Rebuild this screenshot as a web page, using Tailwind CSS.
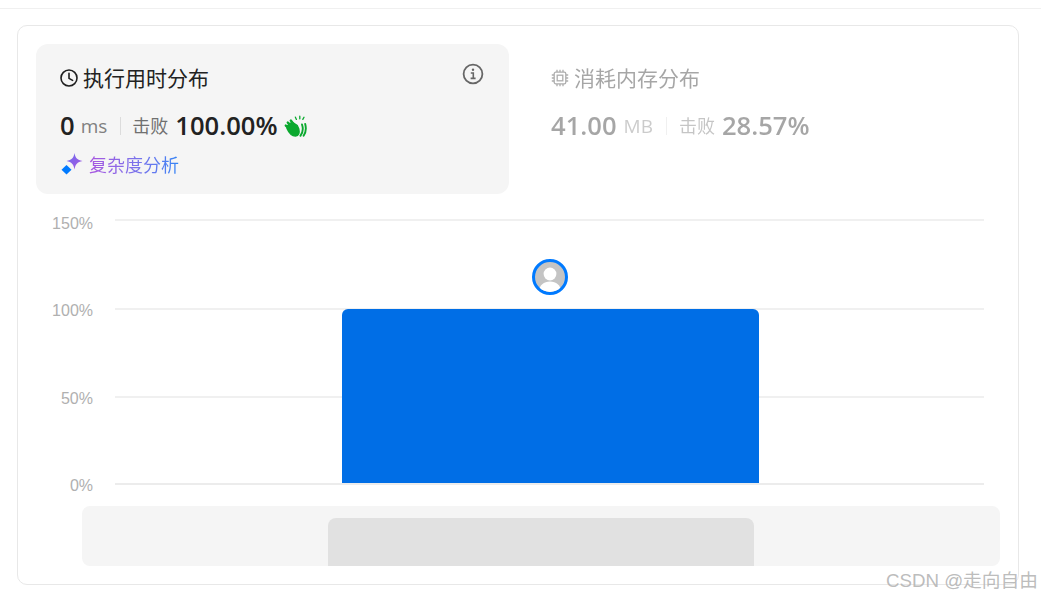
<!DOCTYPE html>
<html lang="zh-CN">
<head>
  <meta charset="UTF-8">
  <title>执行用时分布</title>
  <script src="https://cdn.jsdelivr.net/npm/@tailwindcss/browser@4"></script>
</head>
<body class="relative w-[1041px] h-[599px] overflow-hidden bg-white font-['Open_Sans','Noto_Sans_CJK_SC',sans-serif]">

  <!-- top rule -->
  <div class="h-[9px] border-b border-[#f0f0f0]"></div>

  <div class="mt-4 ml-[17px] w-[1002px] h-[560px] rounded-[10px] border border-[#e8e8e8] pt-[18px] pl-[18px]">

    <!-- tabs -->
    <div class="flex">
      <div class="relative w-[473px] h-[150px] rounded-xl bg-[#f5f5f5] pl-[24px] pt-[21px]">
        <div class="flex items-center h-[26px]">
          <svg class="w-[18px] h-[18px] mr-[5px]" viewBox="0 0 18 18" fill="none" stroke="#1f1f1f" stroke-width="1.6"><circle cx="9" cy="9" r="8"/><path d="M9 4.2V9.4L12.6 11.4" stroke-linecap="round"/></svg>
          <span class="text-[21px] leading-[26px] text-[#222]">执行用时分布</span>
        </div>
        <svg class="absolute left-[426px] top-[19px] w-[22px] h-[22px]" viewBox="0 0 22 22" fill="none" stroke="#666" stroke-width="1.8"><circle cx="11" cy="11" r="9.4"/><circle cx="11" cy="6.7" r="1.2" fill="#666" stroke="none"/><path d="M8.8 10H11.3V15.2M8.6 15.4H13.6" stroke-width="1.6"/></svg>

        <div class="flex items-center h-[32px] mt-[19px]">
          <span class="text-[25.6px] font-semibold text-[#222] leading-[32px]">0</span>
          <span class="ml-[6px] text-[19px] text-[#808080] leading-[32px]">ms</span>
          <span class="ml-[13px] w-px h-[18px] bg-[#dcdcdc]"></span>
          <span class="ml-[11px] text-[18px] text-[#707070] leading-[32px]">击败</span>
          <span class="ml-[7px] text-[25.6px] font-semibold text-[#222] leading-[32px]">100.00%</span>
          <svg class="ml-[6px] w-[23px] h-[23px]" viewBox="0 0 23 23" fill="none" stroke="#0aa82e" stroke-linecap="round">
            <path d="M3 13.5C5 18 8 21 11.5 21C15 21 15.6 17.6 14.8 14L13.2 10.5L8 7L3 11Z" fill="#0aa82e" stroke-width="1.4"/>
            <path d="M1.8 10.6L7.4 15.6M3.8 7.6L9.6 13M6.8 5.6L11.4 11.4" stroke-width="2.4"/>
            <path d="M18 9.5C19.2 13 19 17.4 16.4 20.8M21.2 9C22.4 13.5 21.6 18 19.6 20.8" stroke-width="1.9"/>
            <path d="M11.4 2.2L12.4 4.4M15.8 1.2V3.8M20 2.2L18.8 4.4" stroke-width="1.3"/>
          </svg>
        </div>

        <div class="flex items-center h-[26px] mt-[10px]">
          <svg class="w-[24px] h-[24px] -ml-[1px] mr-[6px]" viewBox="0 0 24 24">
            <defs><linearGradient id="spark" x1="0" y1="0" x2="1" y2="1"><stop offset="0" stop-color="#6d6cf0"/><stop offset="1" stop-color="#a758e0"/></linearGradient></defs>
            <path d="M15.5 0C16.4 4.8 18.2 7 23.5 8C18.2 9 16.4 11.2 15.5 16.5C14.6 11.2 12.8 9 7.5 8C12.8 7 14.6 4.8 15.5 0Z" fill="url(#spark)"/>
            <path d="M7.5 12L12.5 16.8L7.5 21.6L2.5 16.8Z" fill="#007aff"/>
          </svg>
          <span class="text-[18px] leading-[26px] bg-linear-to-r from-[#a855e0] to-[#2f84f5] bg-clip-text text-transparent">复杂度分析</span>
        </div>
      </div>

      <div class="ml-[42px] pt-[21px] opacity-40">
        <div class="flex items-center h-[26px]">
          <svg class="w-[18px] h-[18px] mr-[5px]" viewBox="0 0 18 18" fill="none" stroke="#333" stroke-width="1.3"><rect x="3.2" y="3.2" width="11.6" height="11.6" rx="1.6"/><rect x="6.2" y="6.2" width="5.6" height="5.6"/><path d="M6 .8V3M9 .8V3M12 .8V3M6 15V17.2M9 15V17.2M12 15V17.2M.8 6H3M.8 9H3M.8 12H3M15 6H17.2M15 9H17.2M15 12H17.2"/></svg>
          <span class="text-[21px] leading-[26px] text-[#222]">消耗内存分布</span>
        </div>
        <div class="flex items-center h-[32px] mt-[19px]">
          <span class="text-[25.6px] font-semibold text-[#222] leading-[32px]">41.00</span>
          <span class="ml-[7px] text-[19px] text-[#808080] leading-[32px]">MB</span>
          <span class="ml-[13px] w-px h-[18px] bg-[#dcdcdc]"></span>
          <span class="ml-[12px] text-[18px] text-[#707070] leading-[32px]">击败</span>
          <span class="ml-[7px] text-[25.6px] font-semibold text-[#222] leading-[32px]">28.57%</span>
        </div>
      </div>
    </div>

    <!-- chart -->
    <div class="relative h-[292px] mt-[18px] -ml-[18px]">
      <div class="absolute left-[97px] top-[7px] w-[869px] flex flex-col">
        <div class="h-[2px] mb-[87px] bg-[#f0f0f0]"></div>
        <div class="h-[2px] mb-[86px] bg-[#f0f0f0]"></div>
        <div class="h-[2px] mb-[85px] bg-[#f0f0f0]"></div>
        <div class="h-[2px] bg-[#ececec]"></div>
      </div>
      <div class="absolute left-0 top-[2px] w-[75px] h-[282px] flex flex-col justify-between items-end font-['Liberation_Sans',sans-serif] text-[16px] leading-[20px] text-[#b0b0b0]">
        <span>150%</span>
        <span>100%</span>
        <span>50%</span>
        <span>0%</span>
      </div>
      <div class="absolute left-[324px] top-[97px] w-[417px] h-[174px] rounded-t-[6px] bg-[#006ee6]"></div>
      <div class="absolute left-[514px] top-[47px] w-[36px] h-[36px] rounded-full border-[3px] border-[#007aff] bg-[#c4c4c4] overflow-hidden">
        <svg class="w-full h-full" viewBox="0 0 30 30" fill="#fff"><circle cx="15" cy="12" r="6.4"/><path d="M4 30C4 23 9 19.5 15 19.5S26 23 26 30Z"/></svg>
      </div>
    </div>

    <!-- range slider -->
    <div class="mt-[2px] ml-[46px] w-[918px] h-[60px] rounded-lg bg-[#f5f5f5]"></div>
  </div>

  <div class="absolute left-[328px] top-[518px] w-[426px] h-[48px] rounded-t-lg bg-[#e1e1e1]"></div>
  <div class="absolute left-[886px] top-[569px] font-['Liberation_Sans','Noto_Sans_CJK_SC',sans-serif] text-[18.7px] leading-[24px] text-[#b4b4b4]/90 whitespace-nowrap">CSDN @走向自由</div>
</body>
</html>
